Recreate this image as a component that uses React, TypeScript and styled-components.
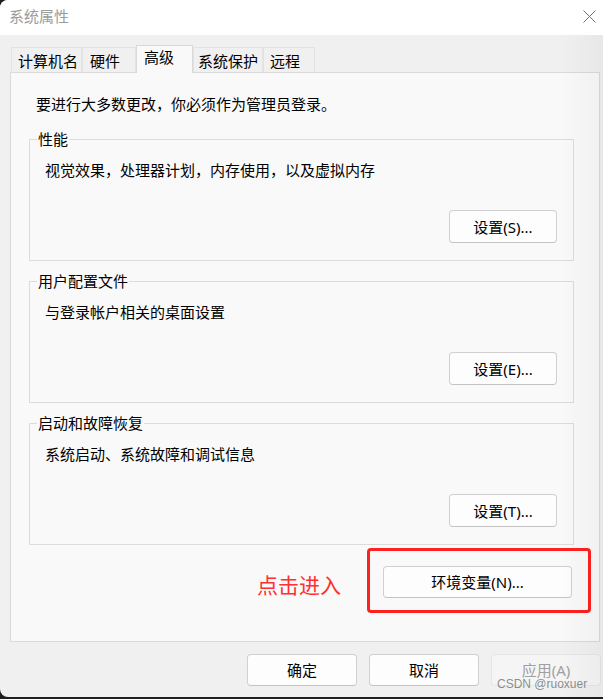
import styled, { createGlobalStyle } from 'styled-components';

const GlobalStyle = createGlobalStyle`
	html, body {
		margin: 0;
		padding: 0;
		background: #1e1e1e;
		overflow: hidden;
	}

	body {
		font-family: "Noto Sans", "Noto Sans CJK SC", sans-serif;
		font-size: 15px;
		color: #1a1a1a;
	}
`;

const tabs = [
	{ label: '计算机名', width: 71, pad: 6 },
	{ label: '硬件', width: 54, pad: 7 },
	{ label: '高级', width: 57, pad: 7, active: true },
	{ label: '系统保护', width: 70, pad: 4 },
	{ label: '远程', width: 52, pad: 6 },
];

const groups = [
	{ title: '性能', text: '视觉效果，处理器计划，内存使用，以及虚拟内存', button: '设置(S)...' },
	{ title: '用户配置文件', text: '与登录帐户相关的桌面设置', button: '设置(E)...' },
	{ title: '启动和故障恢复', text: '系统启动、系统故障和调试信息', button: '设置(T)...' },
];

function CloseIcon() {
	return (
		<svg width="13" height="13" viewBox="0 0 13 13">
			<path d="M0.5 0.5 L12.5 12.5 M12.5 0.5 L0.5 12.5" stroke="#707070" strokeWidth="1" fill="none" />
		</svg>
	);
}

export default function App() {
	return (
		<>
			<GlobalStyle />
			<Window>
				<TitleBar>
					<Title>系统属性</Title>
					<CloseIcon />
				</TitleBar>

				<Body>
					<TabStrip>
						{tabs.map((t) => (
							<Tab key={t.label} $w={t.width} $pl={t.pad} $active={t.active}>
								{t.label}
							</Tab>
						))}
					</TabStrip>

					<Panel>
						<Intro>要进行大多数更改，你必须作为管理员登录。</Intro>

						<Groups>
							{groups.map((g) => (
								<Group key={g.title}>
									<Legend>{g.title}</Legend>
									<GroupText>{g.text}</GroupText>
									<GroupActions>
										<Button $w={108} $h={33}>
											{g.button}
										</Button>
									</GroupActions>
								</Group>
							))}
						</Groups>

						<EnvRow>
							<Hint>点击进入</Hint>
							<Highlight>
								<Button $w={189} $h={32}>
									环境变量(N)...
								</Button>
							</Highlight>
						</EnvRow>
					</Panel>

					<Footer>
						<Button $w={110} $h={32}>
							确定
						</Button>
						<Button $w={110} $h={32}>
							取消
						</Button>
						<Button $w={110} $h={32} disabled>
							应用(A)
						</Button>
					</Footer>
				</Body>

				<EdgeShade />
				<Watermark>CSDN @ruoxuer</Watermark>
			</Window>
		</>
	);
}

const Window = styled.div`
	position: relative;
	width: 603px;
	height: 697px;
	background: #f0f0f0;
	border-radius: 8px 0 0 8px;
	overflow: hidden;
	display: flex;
	flex-direction: column;
`;

const TitleBar = styled.header`
	height: 35px;
	flex-shrink: 0;
	box-sizing: border-box;
	display: flex;
	align-items: center;
	justify-content: space-between;
	padding: 0 7px 3px 9px;
	background: #ffffff;
`;

const Title = styled.span`
	font-size: 15px;
	line-height: 20px;
	color: #9b9b9b;
`;

const Body = styled.div`
	padding: 10px 0 0 10px;
`;

const TabStrip = styled.nav`
	position: relative;
	z-index: 1;
	display: flex;
	align-items: flex-end;
	height: 28px;
	padding-left: 1px;
`;

const Tab = styled.div<{ $w: number; $pl: number; $active?: boolean }>`
	box-sizing: border-box;
	flex-shrink: 0;
	width: ${(p) => p.$w}px;
	height: ${(p) => (p.$active ? 28 : 25)}px;
	margin-bottom: ${(p) => (p.$active ? 0 : 1)}px;
	padding: ${(p) => (p.$active ? 1 : 3)}px 0 0 ${(p) => p.$pl}px;
	border: 1px solid ${(p) => (p.$active ? '#d9d9d9' : '#e3e3e3')};
	border-bottom: none;
	background: ${(p) => (p.$active ? '#f9f9f9' : '#f0f0f0')};
	font-size: 15px;
	line-height: 20px;
	white-space: nowrap;
	color: #000;
`;

const Panel = styled.section`
	box-sizing: border-box;
	width: 590px;
	height: 570px;
	margin-top: -1px;
	padding: 21px 25px 0 18px;
	border: 1px solid #dadada;
	background: #f9f9f9;
	display: flex;
	flex-direction: column;
`;

const Intro = styled.p`
	margin: 0 0 15px 7px;
	font-size: 15px;
	line-height: 20px;
	color: #000;
`;

const Groups = styled.div`
	display: flex;
	flex-direction: column;
	gap: 10px;
`;

const Group = styled.fieldset`
	min-width: 0;
	margin: 0;
	padding: 11px 16px 17px 7px;
	border: 1px solid #dcdcdc;
	border-radius: 0;
`;

const Legend = styled.legend`
	padding: 0 1px;
	font-size: 15px;
	line-height: 20px;
	color: #000;
`;

const GroupText = styled.div`
	padding-left: 8px;
	font-size: 15px;
	line-height: 20px;
	color: #000;
`;

const GroupActions = styled.div`
	display: flex;
	justify-content: flex-end;
	margin-top: 30px;
`;

const Button = styled.button<{ $w: number; $h: number }>`
	box-sizing: border-box;
	width: ${(p) => p.$w}px;
	height: ${(p) => p.$h}px;
	padding: 0;
	border: 1px solid #d0d0d0;
	border-bottom-color: #c4c4c4;
	border-radius: 4px;
	background: #fdfdfd;
	font-family: "Noto Sans", "Noto Sans CJK SC", sans-serif;
	font-size: 15px;
	line-height: 20px;
	color: #000;

	&:disabled {
		border-color: #e6e6e6;
		background: #f5f5f5;
		color: #a0a0a0;
	}
`;

const EnvRow = styled.div`
	display: flex;
	align-items: center;
	justify-content: flex-end;
	margin: 3px -17px 0 0;
`;

const Hint = styled.span`
	margin: 9px 26px 0 0;
	font-size: 21px;
	line-height: 28px;
	color: #ff2f2f;
`;

const Highlight = styled.div`
	padding: 15px 16px 12px 13px;
	border: 3px solid #ff2020;
	border-radius: 4px;
`;

const Footer = styled.footer`
	display: flex;
	justify-content: flex-end;
	gap: 12px;
	padding: 12px 2px 0 0;
`;

const EdgeShade = styled.div`
	position: absolute;
	top: 35px;
	right: 0;
	bottom: 0;
	width: 45px;
	background: linear-gradient(to right, rgba(0, 0, 0, 0), rgba(0, 0, 0, 0.035));
	pointer-events: none;
`;

const Watermark = styled.span`
	position: absolute;
	left: 497px;
	top: 677px;
	font-family: "Liberation Sans", Arial, sans-serif;
	font-size: 12px;
	line-height: 14px;
	color: rgba(120, 120, 120, 0.85);
	pointer-events: none;
`;
